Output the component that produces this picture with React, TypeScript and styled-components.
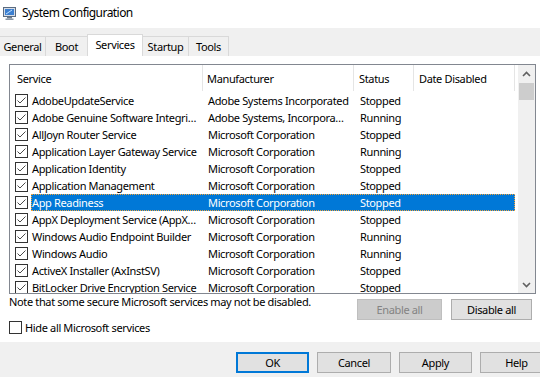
import styled, { createGlobalStyle } from "styled-components";

const GlobalStyle = createGlobalStyle`
  html, body {
    margin: 0;
    padding: 0;
    width: 540px;
    height: 377px;
    overflow: hidden;
    background: #ffffff;
  }
  * {
    box-sizing: border-box;
  }
`;

const Window = styled.div`
  width: 540px;
  height: 377px;
  display: flex;
  flex-direction: column;
  font-family: "Segoe UI", "Noto Sans", "Open Sans", sans-serif;
  font-size: 11px;
  letter-spacing: -0.35px;
  color: #000;
  overflow: hidden;
`;

const TitleBar = styled.div`
  height: 28px;
  background: #ffffff;
  display: flex;
  align-items: center;
  padding: 0 0 2px 2px;
  gap: 4px;
`;

const Title = styled.span`
  font-size: 12px;
  letter-spacing: -0.55px;
  line-height: 16px;
`;

const TabStrip = styled.div`
  height: 28px;
  background: #f0f0f0;
  display: flex;
  align-items: flex-end;
`;

const Tab = styled.div<{ $w: number; $active?: boolean }>`
  width: ${(p) => p.$w}px;
  height: ${(p) => (p.$active ? 22 : 20)}px;
  background: ${(p) => (p.$active ? "#ffffff" : "#f0f0f0")};
  border: 1px solid #d9d9d9;
  border-bottom: none;
  margin-left: -1px;
  display: flex;
  align-items: center;
  justify-content: center;
  padding-bottom: ${(p) => (p.$active ? 3 : 0)}px;
  position: relative;
  z-index: ${(p) => (p.$active ? 1 : 0)};
`;

const TabPage = styled.div`
  height: 286px;
  background: #ffffff;
  padding: 8px 4px 0 9px;
  display: flex;
  flex-direction: column;
`;

const ListBox = styled.div`
  height: 230px;
  border: 1px solid #828790;
  display: flex;
  overflow: hidden;
`;

const Table = styled.div`
  flex: 1;
  display: flex;
  flex-direction: column;
  overflow: hidden;
`;

const HeaderRow = styled.div`
  height: 27px;
  display: flex;
  flex-shrink: 0;
`;

const HeaderCell = styled.div<{ $w: number; $pad: number }>`
  width: ${(p) => p.$w}px;
  padding-left: ${(p) => p.$pad}px;
  border-right: 1px solid #e5e5e5;
  height: 26px;
  display: flex;
  align-items: center;
  white-space: nowrap;
`;

const Row = styled.div`
  height: 17px;
  display: flex;
  flex-shrink: 0;
`;

const CheckCell = styled.div`
  width: 21px;
  display: flex;
  align-items: center;
  padding-left: 5px;
`;

const RowBody = styled.div<{ $selected?: boolean }>`
  display: grid;
  grid-template-columns: 172px 151px 60px 101px;
  align-items: center;
  background: ${(p) => (p.$selected ? "#0078d7" : "transparent")};
  color: ${(p) => (p.$selected ? "#ffffff" : "#000000")};
  outline: ${(p) => (p.$selected ? "1px dotted #f2a33a" : "none")};
  outline-offset: -1px;
`;

const Cell = styled.div<{ $pad: number }>`
  padding-left: ${(p) => p.$pad}px;
  white-space: nowrap;
  overflow: hidden;
  line-height: 17px;
`;

const Box = styled.div`
  width: 13px;
  height: 13px;
  border: 1px solid #333333;
  background: #ffffff;
  display: flex;
  align-items: center;
  justify-content: center;
  flex-shrink: 0;
`;

const ScrollBar = styled.div`
  width: 17px;
  background: #f0f0f0;
  display: flex;
  flex-direction: column;
  margin-left: 3px;
`;

const ArrowBtn = styled.div`
  height: 17px;
  display: flex;
  align-items: center;
  justify-content: center;
`;

const Thumb = styled.div`
  height: 17px;
  margin: 1px 1px 0 1px;
  background: #cdcdcd;
`;

const Track = styled.div`
  flex: 1;
`;

const NoteRow = styled.div`
  display: flex;
  align-items: flex-start;
  height: 27px;
`;

const Note = styled.div`
  line-height: 16px;
  white-space: nowrap;
`;

const ButtonGroup = styled.div`
  margin-left: auto;
  margin-right: 4px;
  margin-top: 5px;
  display: flex;
  gap: 9px;
`;

const WinButton = styled.button<{ $w: number; $focused?: boolean }>`
  width: ${(p) => p.$w}px;
  height: 21px;
  font: inherit;
  letter-spacing: inherit;
  color: #000;
  background: #e1e1e1;
  border: ${(p) => (p.$focused ? "2px solid #0078d7" : "1px solid #adadad")};
  padding: 0;
  flex-shrink: 0;
  &:disabled {
    background: #cccccc;
    border-color: #bfbfbf;
    color: #838383;
  }
`;

const HideRow = styled.label`
  display: flex;
  align-items: center;
  gap: 3px;
  height: 13px;
`;

const Footer = styled.div`
  flex: 1;
  background: #f0f0f0;
  display: flex;
  align-items: flex-start;
  padding: 10px 0 0 236px;
  gap: 8px;
  overflow: hidden;
`;

const AppIcon = () => (
  <svg width="16" height="16" viewBox="0 0 16 16">
    <rect x="1.5" y="2.5" width="12" height="9" fill="#d7dde6" stroke="#5a6b80" />
    <rect x="3" y="4" width="9" height="6" fill="#3c7fd0" />
    <path d="M4 9 L10 5" stroke="#bfe0ff" strokeWidth="1" />
    <rect x="5" y="12" width="5" height="1.5" fill="#6b7a8c" />
    <rect x="3.5" y="13.5" width="8" height="1.5" fill="#8a97a6" />
  </svg>
);

const Check = () => (
  <svg width="11" height="11" viewBox="0 0 11 11">
    <path d="M1.5 5.5 L4 8 L9.5 2.5" fill="none" stroke="#4a4a4a" strokeWidth="1" />
  </svg>
);

const Chevron = ({ up }: { up?: boolean }) => (
  <svg width="9" height="6" viewBox="0 0 9 6">
    <path
      d={up ? "M1 5 L4.5 1.5 L8 5" : "M1 1 L4.5 4.5 L8 1"}
      fill="none"
      stroke="#606060"
      strokeWidth="1.6"
    />
  </svg>
);

const MS = "Microsoft Corporation";

const services: [string, string, string][] = [
  ["AdobeUpdateService", "Adobe Systems Incorporated", "Stopped"],
  ["Adobe Genuine Software Integri…", "Adobe Systems, Incorpora…", "Running"],
  ["AllJoyn Router Service", MS, "Stopped"],
  ["Application Layer Gateway Service", MS, "Running"],
  ["Application Identity", MS, "Stopped"],
  ["Application Management", MS, "Stopped"],
  ["App Readiness", MS, "Stopped"],
  ["AppX Deployment Service (AppX…", MS, "Stopped"],
  ["Windows Audio Endpoint Builder", MS, "Running"],
  ["Windows Audio", MS, "Running"],
  ["ActiveX Installer (AxInstSV)", MS, "Stopped"],
  ["BitLocker Drive Encryption Service", MS, "Stopped"],
];

const tabs: [string, number][] = [
  ["General", 47],
  ["Boot", 43],
  ["Services", 56],
  ["Startup", 47],
  ["Tools", 41],
];

export default function App() {
  return (
    <>
      <GlobalStyle />
      <Window>
        <TitleBar>
          <AppIcon />
          <Title>System Configuration</Title>
        </TitleBar>
        <TabStrip>
          {tabs.map(([name, w]) => (
            <Tab key={name} $w={w} $active={name === "Services"}>
              {name}
            </Tab>
          ))}
        </TabStrip>
        <TabPage>
          <ListBox>
            <Table>
              <HeaderRow>
                <HeaderCell $w={193} $pad={7}>Service</HeaderCell>
                <HeaderCell $w={151} $pad={4}>Manufacturer</HeaderCell>
                <HeaderCell $w={60} $pad={5}>Status</HeaderCell>
                <HeaderCell $w={101} $pad={5}>Date Disabled</HeaderCell>
              </HeaderRow>
              {services.map(([name, maker, status], i) => (
                <Row key={name}>
                  <CheckCell>
                    <Box>
                      <Check />
                    </Box>
                  </CheckCell>
                  <RowBody $selected={i === 6}>
                    <Cell $pad={1}>{name}</Cell>
                    <Cell $pad={5}>{maker}</Cell>
                    <Cell $pad={6}>{status}</Cell>
                    <Cell $pad={5}></Cell>
                  </RowBody>
                </Row>
              ))}
            </Table>
            <ScrollBar>
              <ArrowBtn>
                <Chevron up />
              </ArrowBtn>
              <Thumb />
              <Track />
              <ArrowBtn>
                <Chevron />
              </ArrowBtn>
            </ScrollBar>
          </ListBox>
          <NoteRow>
            <Note>Note that some secure Microsoft services may not be disabled.</Note>
            <ButtonGroup>
              <WinButton $w={85} disabled>
                Enable all
              </WinButton>
              <WinButton $w={81}>Disable all</WinButton>
            </ButtonGroup>
          </NoteRow>
          <HideRow>
            <Box />
            Hide all Microsoft services
          </HideRow>
        </TabPage>
        <Footer>
          <WinButton $w={73} $focused>
            OK
          </WinButton>
          <WinButton $w={74}>Cancel</WinButton>
          <WinButton $w={73}>Apply</WinButton>
          <WinButton $w={73}>Help</WinButton>
        </Footer>
      </Window>
    </>
  );
}
